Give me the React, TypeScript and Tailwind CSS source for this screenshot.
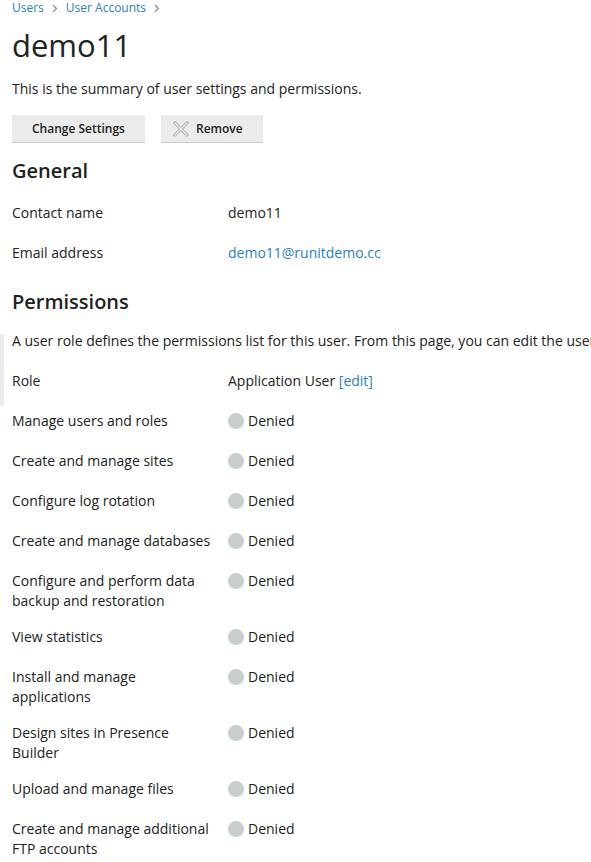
import React from "react";

const permissions = [
  "Manage users and roles",
  "Create and manage sites",
  "Configure log rotation",
  "Create and manage databases",
  "Configure and perform data backup and restoration",
  "View statistics",
  "Install and manage applications",
  "Design sites in Presence Builder",
  "Upload and manage files",
  "Create and manage additional FTP accounts",
];

const Row: React.FC<{ label: string; children: React.ReactNode }> = ({ label, children }) => (
  <div className="flex min-h-10 py-2 text-[14px] leading-5">
    <div className="w-[216px] shrink-0 pr-4">{label}</div>
    <div className="flex-1">{children}</div>
  </div>
);

const Denied = () => (
  <span className="flex items-center gap-1">
    <span className="inline-block h-4 w-4 rounded-full bg-[#c9ced1]" />
    <span>Denied</span>
  </span>
);

const Chevron = () => (
  <svg width="6" height="9" viewBox="0 0 6 9" fill="none">
    <polyline points="1,1 4.5,4.5 1,8" stroke="#8a8a8a" strokeWidth="1.1" />
  </svg>
);

const App: React.FC = () => {
  return (
    <div
      className="relative min-h-[862px] overflow-hidden bg-white px-3 text-[#222]"
      style={{ fontFamily: '"Open Sans", "Liberation Sans", sans-serif' }}
    >
      <div className="absolute left-0 top-[334px] h-[72px] w-[4px] bg-[#ebebeb]" />

      <div className="flex items-center gap-2 pt-px text-[12px] leading-[14px] text-[#2b7fc2]">
        <a>Users</a>
        <Chevron />
        <a>User Accounts</a>
        <Chevron />
      </div>

      <h1 className="mt-[10px] text-[31px] leading-[40px] text-[#222]">demo11</h1>

      <p className="mt-[14px] text-[14px] leading-5">This is the summary of user settings and permissions.</p>

      <div className="mt-4 flex gap-4">
        <button className="h-[28px] border-b border-[#cbcbcb] bg-[#ebebeb] px-5 text-[12px] font-semibold text-[#222]">
          Change Settings
        </button>
        <button className="flex h-[28px] items-center gap-[7px] border-b border-[#cbcbcb] bg-[#ebebeb] pl-3 pr-5 text-[12px] font-semibold text-[#222]">
          <svg width="16" height="16" viewBox="0 0 16 16" fill="none">
            <polygon
              points="2,0.5 8,6.5 14,0.5 15.5,2 9.5,8 15.5,14 14,15.5 8,9.5 2,15.5 0.5,14 6.5,8 0.5,2"
              stroke="#a3a3a3"
              strokeWidth="1"
              strokeLinejoin="round"
            />
          </svg>
          Remove
        </button>
      </div>

      <h2 className="mt-[14px] text-[20px] font-semibold leading-7">General</h2>
      <div className="mt-[10px]">
        <Row label="Contact name">demo11</Row>
        <Row label="Email address">
          <a className="text-[#2b7fc2]">demo11@runitdemo.cc</a>
        </Row>
      </div>

      <h2 className="mt-[13px] text-[20px] font-semibold leading-7">Permissions</h2>
      <p className="mb-[2px] mt-[5px] whitespace-nowrap py-[10px] text-[14px] leading-5">
        A user role defines the permissions list for this user. From this page, you can edit the user role.
      </p>
      <Row label="Role">
        Application User <a className="text-[#2b7fc2]">[edit]</a>
      </Row>
      {permissions.map((p) => (
        <Row key={p} label={p}>
          <Denied />
        </Row>
      ))}
    </div>
  );
};

export default App;
